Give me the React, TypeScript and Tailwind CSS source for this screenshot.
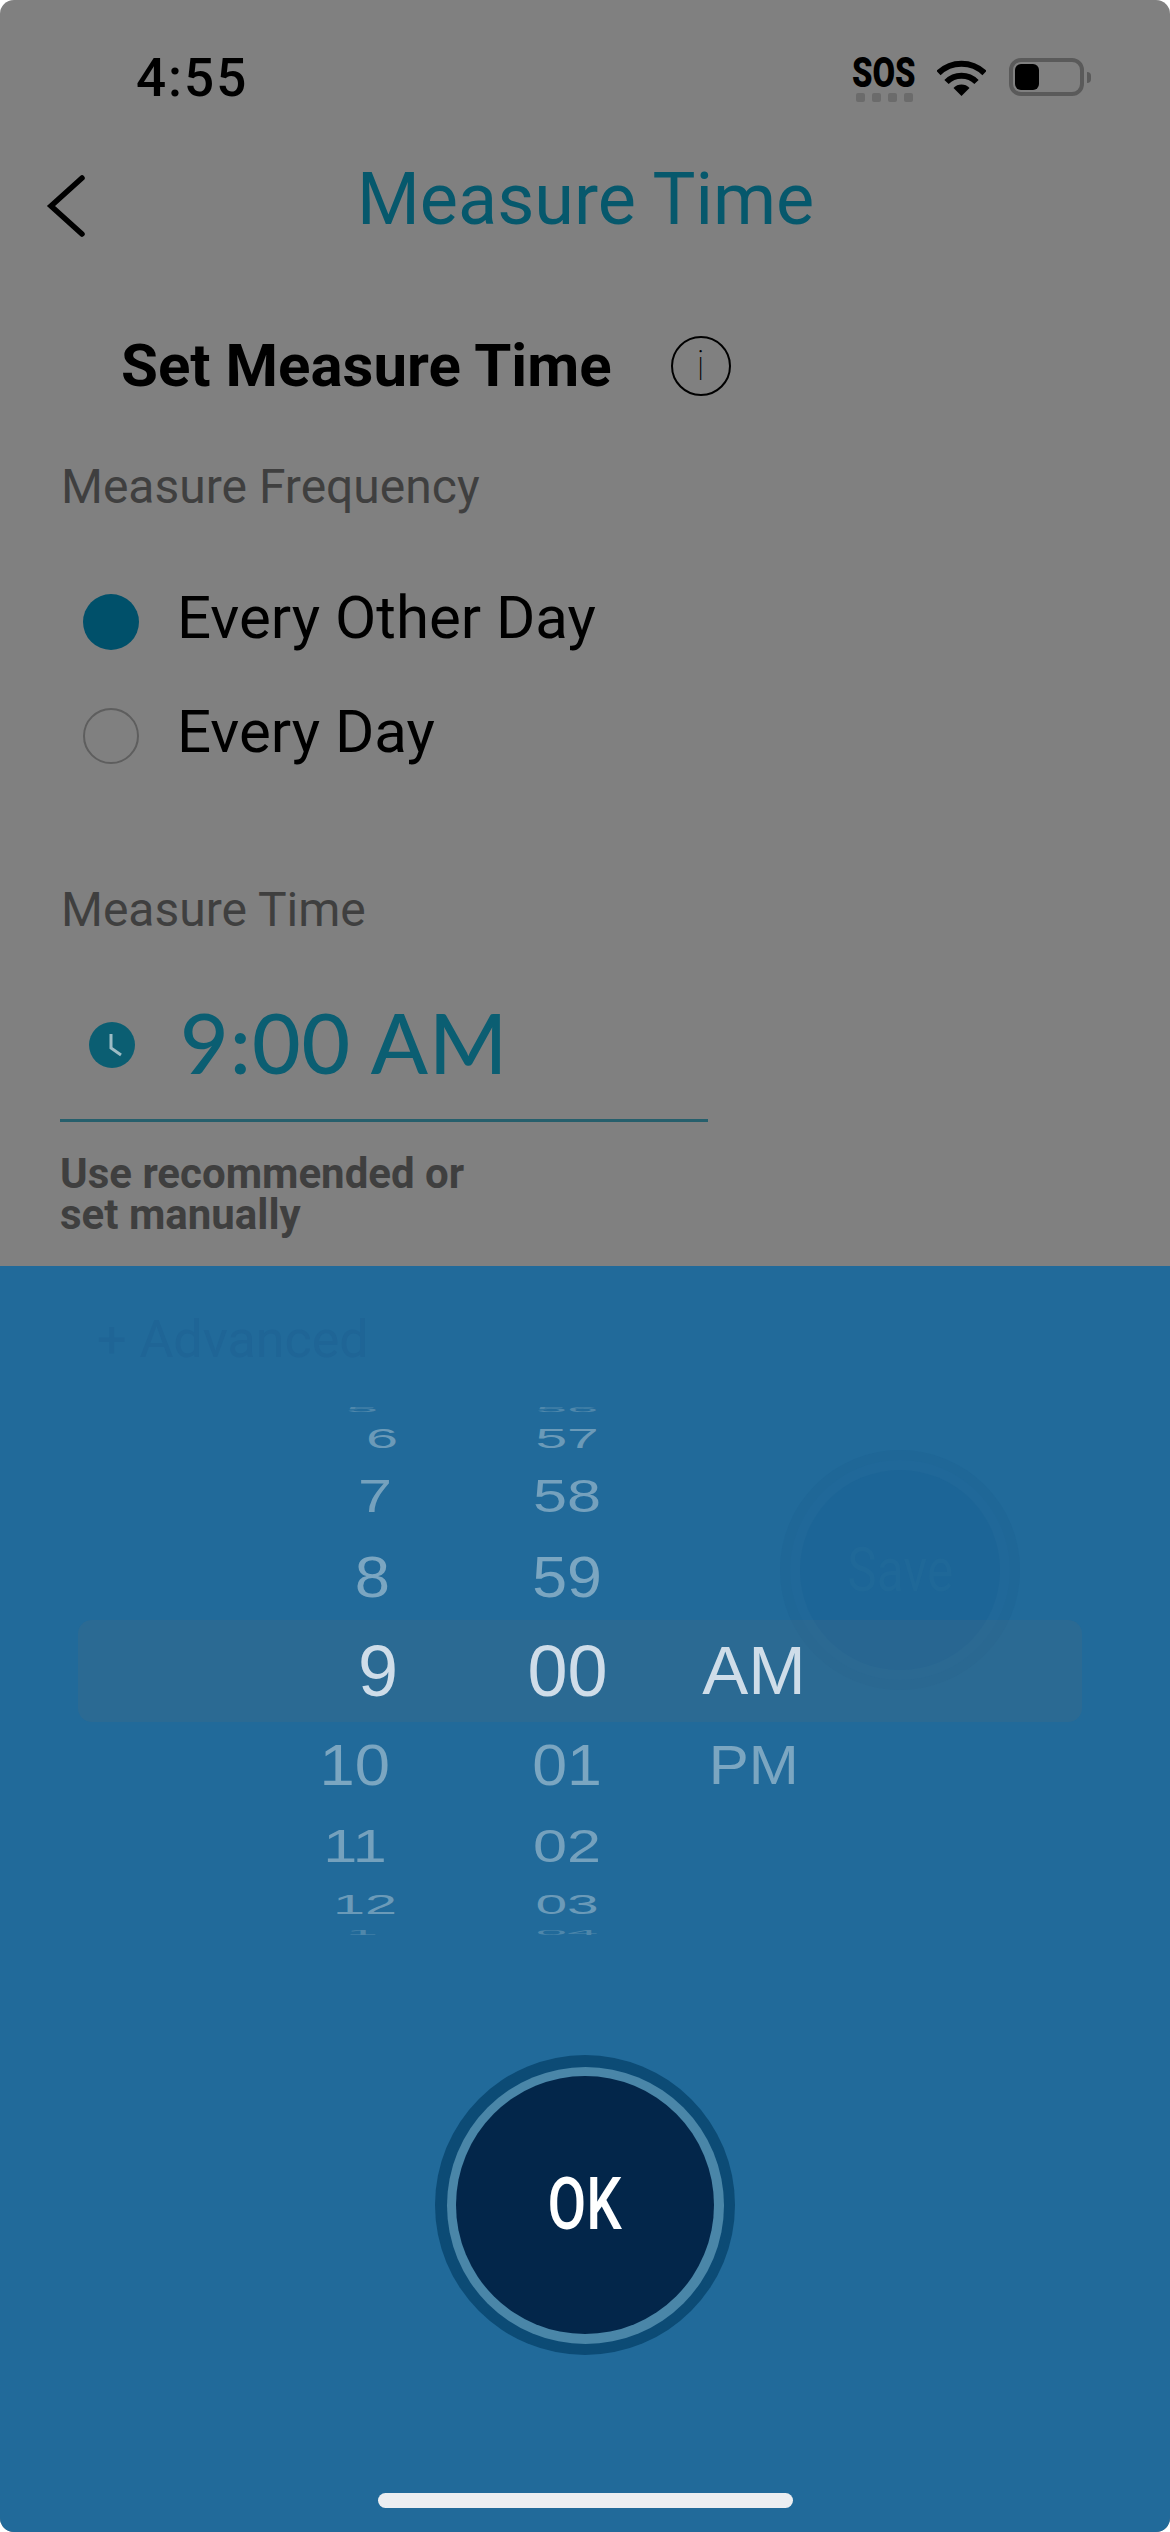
import React from "react";

const hours = [
  { t: "5", row: "h-[8px]", pr: "pr-[20px]", tf: "scale-x-[0.8] scale-y-[0.1]", op: "text-[#4f87ab]" },
  { t: "6", row: "h-[50px]", pr: "pr-[0px]", tf: "scale-x-[0.8] scale-y-[0.38]", op: "text-[#6b9ab8]" },
  { t: "7", row: "h-[66px]", pr: "pr-[6px]", tf: "scale-x-[0.85] scale-y-[0.65]", op: "text-[#75a1bd]" },
  { t: "8", row: "h-[96px]", pr: "pr-[8px]", tf: "scale-x-[0.88] scale-y-[0.81]", op: "text-[#7ba6c1]" },
  { t: "9", row: "h-[92px]", pr: "pr-[0px]", tf: "", op: "text-[#cfdde9]" },
  { t: "10", row: "h-[96px]", pr: "pr-[8px]", tf: "scale-x-[0.88] scale-y-[0.81]", op: "text-[#7ba6c1]" },
  { t: "11", row: "h-[66px]", pr: "pr-[11px]", tf: "scale-x-[0.85] scale-y-[0.65]", op: "text-[#75a1bd]" },
  { t: "12", row: "h-[50px]", pr: "pr-[1px]", tf: "scale-x-[0.8] scale-y-[0.38]", op: "text-[#6b9ab8]" },
  { t: "1", row: "h-[6px]", pr: "pr-[20px]", tf: "scale-x-[0.8] scale-y-[0.1]", op: "text-[#4f87ab]" },
];

const minutes = [
  { t: "56", row: "h-[8px]", tf: "scale-x-[0.78] scale-y-[0.1]", op: "text-[#4f87ab]" },
  { t: "57", row: "h-[50px]", tf: "scale-x-[0.79] scale-y-[0.38]", op: "text-[#6b9ab8]" },
  { t: "58", row: "h-[66px]", tf: "scale-x-[0.85] scale-y-[0.65]", op: "text-[#75a1bd]" },
  { t: "59", row: "h-[96px]", tf: "scale-x-[0.87] scale-y-[0.81]", op: "text-[#7ba6c1]" },
  { t: "00", row: "h-[92px]", tf: "", op: "text-[#cfdde9]" },
  { t: "01", row: "h-[96px]", tf: "scale-x-[0.87] scale-y-[0.81]", op: "text-[#7ba6c1]" },
  { t: "02", row: "h-[66px]", tf: "scale-x-[0.85] scale-y-[0.65]", op: "text-[#75a1bd]" },
  { t: "03", row: "h-[50px]", tf: "scale-x-[0.79] scale-y-[0.38]", op: "text-[#6b9ab8]" },
  { t: "04", row: "h-[6px]", tf: "scale-x-[0.78] scale-y-[0.1]", op: "text-[#4f87ab]" },
];

const Wifi = () => (
  <svg viewBox="0 0 49 37" className="w-[49px] h-[37px]">
    <path d="M1.5 14 A33 33 0 0 1 47.5 14" fill="none" stroke="#000" strokeWidth="6" />
    <path d="M9.5 23 A21 21 0 0 1 39.5 23" fill="none" stroke="#000" strokeWidth="6" />
    <path d="M24.5 37 L16.5 29 A11 11 0 0 1 32.5 29 Z" fill="#000" />
  </svg>
);

const ClockIcon = () => (
  <svg viewBox="0 0 46 46" className="w-[46px] h-[46px]">
    <circle cx="23" cy="23" r="23" fill="#0b5e72" />
    <path d="M22 12 V26 L32 33" fill="none" stroke="#9dbcc4" strokeWidth="3" />
  </svg>
);

export default function App() {
  return (
    <div className="w-[1170px] h-[2532px] bg-white">
      <div className="relative w-full h-full overflow-hidden rounded-[14px] bg-[#808080] font-['Roboto',sans-serif]">
        {/* Status bar */}
        <div className="flex justify-between items-start pl-[136px] pr-[79px] pt-[50px] h-[165px]">
          <span className="text-[53px] leading-[57px] font-medium text-black tracking-[2px]">4:55</span>
          <div className="flex items-start pt-[7px]">
            <div className="flex flex-col items-center w-[62px]">
              <span className="text-[42px] leading-[32px] font-black text-black scale-x-[0.78]">SOS</span>
              <div className="flex gap-[7px] mt-[4px]">
                <span className="w-[9px] h-[9px] rounded-[2px] bg-[#6b6b6b]" />
                <span className="w-[9px] h-[9px] rounded-[2px] bg-[#6b6b6b]" />
                <span className="w-[9px] h-[9px] rounded-[2px] bg-[#6b6b6b]" />
                <span className="w-[9px] h-[9px] rounded-[2px] bg-[#6b6b6b]" />
              </div>
            </div>
            <div className="ml-[22px] mt-[2px]">
              <Wifi />
            </div>
            <div className="ml-[23px] mt-[1px] flex items-center">
              <div className="w-[75px] h-[38px] rounded-[12px] border-[4px] border-[#5a5a5a] p-[2px]">
                <div className="w-[24px] h-full rounded-[6px] bg-black" />
              </div>
              <div className="ml-[3px] w-[4px] h-[11px] rounded-r-full bg-[#5a5a5a]" />
            </div>
          </div>
        </div>

        {/* Header */}
        <div className="flex items-center h-[70px] pl-[45px]">
          <svg viewBox="0 0 42 66" className="w-[42px] h-[66px] mt-[12px]">
            <path d="M37 5 L6 33 L37 61" fill="none" stroke="#000" strokeWidth="5.5" strokeLinecap="round" />
          </svg>
          <h1 className="ml-[270px] text-[72px] leading-[70px] font-normal text-[#06586c]">Measure Time</h1>
        </div>

        {/* Section title */}
        <div className="flex items-center mt-[100px] pl-[121px] h-[62px]">
          <h2 className="text-[60px] leading-[62px] font-bold text-black">Set Measure Time</h2>
          <div className="ml-[59px] w-[60px] h-[60px] rounded-full border-2 border-black flex items-center justify-center">
            <span className="text-[42px] leading-none font-thin text-black">i</span>
          </div>
        </div>

        {/* Frequency */}
        <p className="mt-[63px] pl-[61px] text-[48px] leading-[54px] text-[#3f3f3f]">Measure Frequency</p>
        <div className="mt-[79px] pl-[83px] flex items-center h-[58px]">
          <span className="w-[56px] h-[56px] rounded-full bg-[#00506a]" />
          <span className="ml-[38px] mb-[8px] text-[60px] leading-[58px] text-black">Every Other Day</span>
        </div>
        <div className="mt-[56px] pl-[83px] flex items-center h-[58px]">
          <span className="w-[56px] h-[56px] rounded-full border-2 border-[#5e5e5e]" />
          <span className="ml-[38px] mb-[8px] text-[60px] leading-[58px] text-black">Every Day</span>
        </div>

        {/* Time */}
        <p className="mt-[118px] pl-[61px] text-[48px] leading-[54px] text-[#3f3f3f]">Measure Time</p>
        <div className="w-[648px] ml-[60px] mt-[65px] h-[120px] border-b-[3px] border-[#265f6c] flex items-start pl-[29px]">
          <div className="mt-[20px]">
            <ClockIcon />
          </div>
          <span className="ml-[45px] text-[84px] leading-[80px] font-medium tracking-[1px] font-['Lato',sans-serif] text-[#0b5e72]">9:00 AM</span>
        </div>
        <p className="mt-[31px] pl-[60px] text-[42px] leading-[41px] font-bold text-[#3f3f3f]">
          Use recommended or
          <br />
          set manually
        </p>

        {/* Bottom sheet */}
        <div className="absolute left-0 right-0 top-[1266px] bottom-0 bg-[#216a9a] flex flex-col">
          <p className="mt-[46px] pl-[97px] text-[52px] leading-[56px] text-[#1f6596]">+ Advanced</p>

          {/* ghost Save button under the sheet */}
          <div className="absolute left-[780px] top-[184px] w-[240px] h-[240px] rounded-full bg-[#1f6797] flex items-center justify-center">
            <div className="w-[220px] h-[220px] rounded-full bg-[#206899] flex items-center justify-center">
              <div className="w-[200px] h-[200px] rounded-full bg-[#1c6597] flex items-center justify-center">
                <span className="text-[62px] leading-none text-[#1f6898] scale-x-[0.8]">Save</span>
              </div>
            </div>
          </div>

          {/* selection band */}
          <div className="absolute left-[78px] top-[354px] w-[1004px] h-[102px] rounded-[14px] bg-[#4a6a80]/25" />

          {/* Picker */}
          <div className="relative mt-[37px] h-[530px] flex overflow-hidden font-['Liberation_Sans',sans-serif] text-[72px] leading-[80px]">
            <div className="w-[398px] flex flex-col">
              {hours.map((h) => (
                <div key={h.t} className={`${h.row} ${h.pr} flex items-center justify-end`}>
                  <span className={`origin-right whitespace-nowrap ${h.tf} ${h.op}`}>{h.t}</span>
                </div>
              ))}
            </div>
            <div className="ml-[117px] w-[105px] flex flex-col">
              {minutes.map((m) => (
                <div key={m.t} className={`${m.row} flex items-center justify-center`}>
                  <span className={`whitespace-nowrap ${m.tf} ${m.op}`}>{m.t}</span>
                </div>
              ))}
            </div>
            <div className="ml-[74px] w-[120px] flex flex-col items-center pt-[219px] text-[69px]">
              <div className="h-[94px] flex items-center text-[#cfdde9]">AM</div>
              <div className="h-[94px] flex items-center text-[#7ba6c1] scale-x-[0.87] scale-y-[0.81]">PM</div>
            </div>
          </div>

          {/* OK */}
          <div className="mt-[120px] self-center w-[300px] h-[300px] rounded-full bg-[#0c4b75] flex items-center justify-center">
            <div className="w-[277px] h-[277px] rounded-full bg-[#4a86a8] flex items-center justify-center">
              <div className="w-[258px] h-[258px] rounded-full bg-[#03264a] flex items-center justify-center">
                <span className="text-[72px] leading-none font-medium text-white scale-x-[0.78]">OK</span>
              </div>
            </div>
          </div>

          {/* Home bar */}
          <div className="mt-[138px] self-center w-[415px] h-[15px] rounded-full bg-[#eceef1]" />
        </div>
      </div>
    </div>
  );
}
